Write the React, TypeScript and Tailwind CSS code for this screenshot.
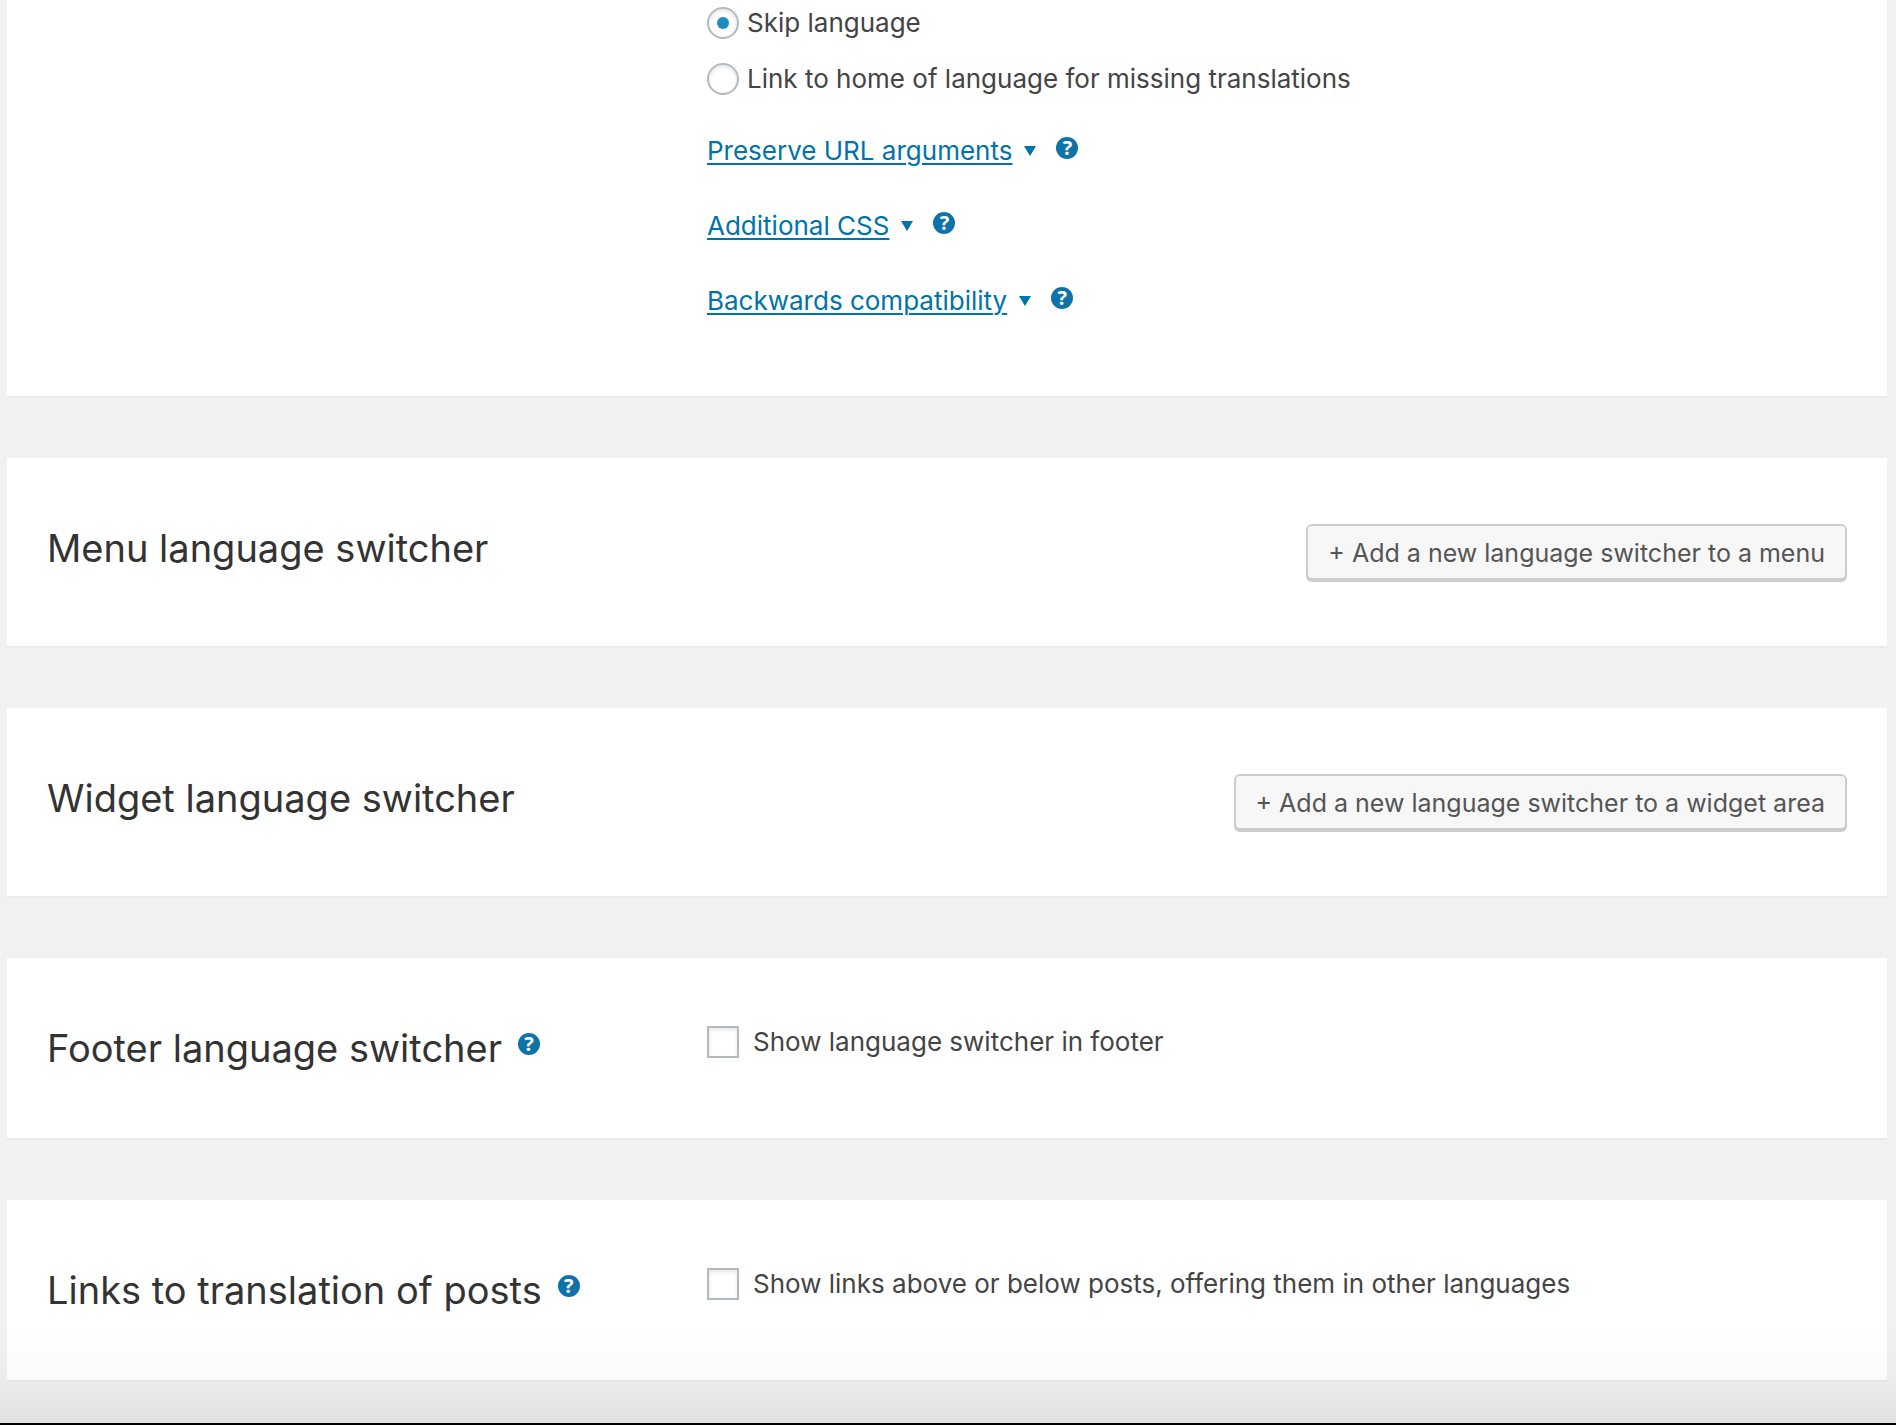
import { useState } from "react";
import type { ReactNode } from "react";

const expandableOptions = [
  "Preserve URL arguments",
  "Additional CSS",
  "Backwards compatibility",
];

function HelpButton({ label }: { label: string }) {
  return (
    <button
      type="button"
      aria-label={`Help: ${label}`}
      className="flex size-[22px] shrink-0 items-center justify-center rounded-full bg-[#0f73aa] font-['Open_Sans',sans-serif] text-xl leading-none font-bold text-white"
    >
      ?
    </button>
  );
}

function Panel({ children }: { children: ReactNode }) {
  return (
    <section className="bg-white px-10 shadow-[0_2px_0_#ebebeb]">
      {children}
    </section>
  );
}

function PanelTitle({ children }: { children: ReactNode }) {
  return (
    <h2 className="text-[38px] leading-[52px] text-[#333]">{children}</h2>
  );
}

function AddButton({ children }: { children: ReactNode }) {
  return (
    <button
      type="button"
      className="mt-0.5 h-14 rounded-md border-2 border-[#ccc] bg-[#f7f7f7] px-5 pt-0.5 text-[25px] text-[#555] shadow-[0_2px_0_#ccc]"
    >
      {children}
    </button>
  );
}

function Radio({
  id,
  label,
  checked,
  onChange,
}: {
  id: string;
  label: string;
  checked: boolean;
  onChange: () => void;
}) {
  return (
    <div className="flex items-center gap-2">
      <input
        type="radio"
        id={id}
        name="missing-translation"
        checked={checked}
        onChange={onChange}
        className="flex size-8 shrink-0 appearance-none items-center justify-center rounded-full border-2 border-[#b4b9be] bg-white shadow-[inset_0_2px_4px_rgba(0,0,0,0.1)] before:size-3 before:rounded-full checked:before:bg-[#1e8cbe]"
      />
      <label htmlFor={id}>{label}</label>
    </div>
  );
}

function Checkbox({ id, label }: { id: string; label: string }) {
  return (
    <div className="flex items-center gap-3.5">
      <input
        type="checkbox"
        id={id}
        className="size-8 shrink-0 appearance-none border-2 border-[#b4b9be] bg-white shadow-[inset_0_2px_4px_rgba(0,0,0,0.1)] checked:bg-[#1e8cbe]"
      />
      <label htmlFor={id}>{label}</label>
    </div>
  );
}

export default function App() {
  const [missing, setMissing] = useState("skip");

  return (
    <div className="relative min-h-screen border-b-2 border-black bg-[#f1f1f1] font-['Inter',sans-serif] text-[26px] leading-8 text-[#444]">
      <main className="flex flex-col gap-[62px] pr-[9px] pb-[43px] pl-[7px]">
        <Panel>
          <div className="grid grid-cols-[11fr_19fr] pt-[7px] pb-[79px]">
            <div className="col-start-2">
              <div className="flex flex-col gap-6">
                <Radio
                  id="missing-skip"
                  label="Skip language"
                  checked={missing === "skip"}
                  onChange={() => setMissing("skip")}
                />
                <Radio
                  id="missing-home"
                  label="Link to home of language for missing translations"
                  checked={missing === "home"}
                  onChange={() => setMissing("home")}
                />
              </div>
              <ul className="mt-10 flex flex-col gap-[43px]">
                {expandableOptions.map((option) => (
                  <li key={option} className="flex items-center">
                    <a
                      href="#"
                      className="flex items-center gap-3 text-[#0073aa]"
                    >
                      <span className="underline decoration-2 underline-offset-3">
                        {option}
                      </span>
                      <svg width="12" height="10" viewBox="0 0 12 10">
                        <path d="M0 0h12L6 10z" fill="currentColor" />
                      </svg>
                    </a>
                    <div className="ml-5 pb-1.5">
                      <HelpButton label={option} />
                    </div>
                  </li>
                ))}
              </ul>
            </div>
          </div>
        </Panel>

        <Panel>
          <div className="flex items-start justify-between pt-16 pb-[66px]">
            <PanelTitle>Menu language switcher</PanelTitle>
            <AddButton>+ Add a new language switcher to a menu</AddButton>
          </div>
        </Panel>

        <Panel>
          <div className="flex items-start justify-between pt-16 pb-[66px]">
            <PanelTitle>Widget language switcher</PanelTitle>
            <AddButton>+ Add a new language switcher to a widget area</AddButton>
          </div>
        </Panel>

        <Panel>
          <div className="grid grid-cols-[11fr_19fr] items-start py-16">
            <div className="flex items-center gap-4">
              <PanelTitle>Footer language switcher</PanelTitle>
              <div className="pb-2">
                <HelpButton label="Footer language switcher" />
              </div>
            </div>
            <div className="pt-1">
              <Checkbox
                id="show-footer"
                label="Show language switcher in footer"
              />
            </div>
          </div>
        </Panel>

        <Panel>
          <div className="grid grid-cols-[11fr_19fr] items-start py-16">
            <div className="flex items-center gap-4">
              <PanelTitle>Links to translation of posts</PanelTitle>
              <div className="pb-2">
                <HelpButton label="Links to translation of posts" />
              </div>
            </div>
            <div className="pt-1">
              <Checkbox
                id="show-post-links"
                label="Show links above or below posts, offering them in other languages"
              />
            </div>
          </div>
        </Panel>
      </main>

      {/* Shade along the bottom edge */}
      <div className="pointer-events-none absolute inset-x-0 bottom-0 h-24 bg-linear-to-b from-transparent via-black/2 via-55% to-black/7" />
    </div>
  );
}
